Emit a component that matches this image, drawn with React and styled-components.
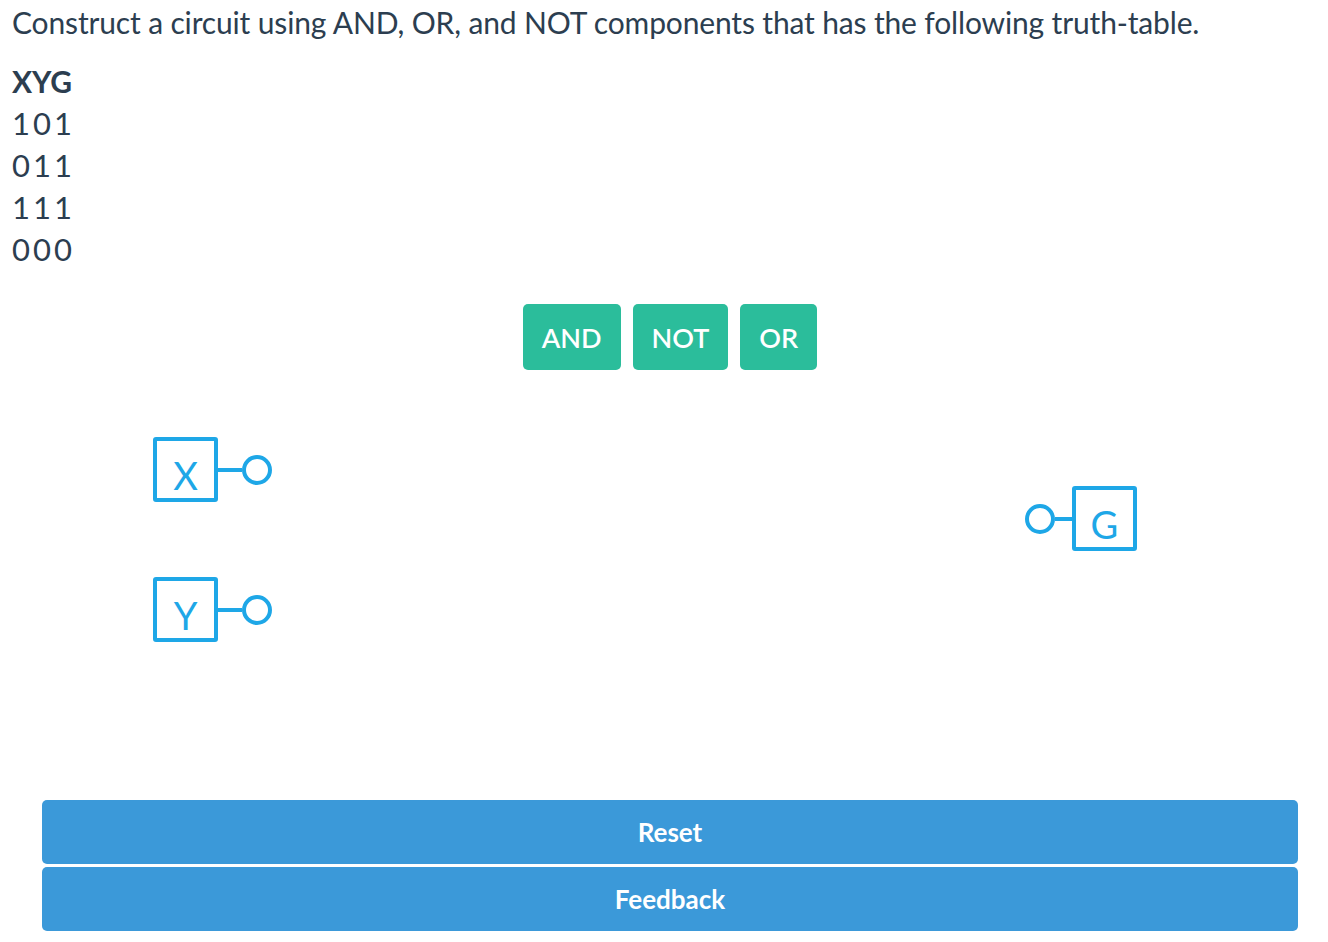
import styled, { createGlobalStyle } from 'styled-components';

const GlobalStyle = createGlobalStyle`
  body {
    margin: 0;
    background: #fff;
    font-family: 'Lato', 'Liberation Sans', sans-serif;
    color: #2c3e50;
  }
`

const rows = ['101', '011', '111', '000'];

const Node = ({ label, reverse, wire, left, top }) => (
  <NodeWrap reverse={reverse} style={{ left, top }}>
    <Box>{label}</Box>
    <Wire length={wire} />
    <Port />
  </NodeWrap>
)

const App = () => {
  return (
    <Page>
      <GlobalStyle />
      <Question>
        Construct a circuit using AND, OR, and NOT components that has the following truth-table.
      </Question>
      <Table>
        <Head>XYG</Head>
        {rows.map((r) => (
          <Row key={r}>{r}</Row>
        ))}
      </Table>

      <Toolbar>
        <Gate>AND</Gate>
        <Gate>NOT</Gate>
        <Gate>OR</Gate>
      </Toolbar>

      <Canvas>
        <Node label="X" wire={24} left={153} top={67} />
        <Node label="Y" wire={24} left={153} top={207} />
        <Node label="G" wire={17} left={1025} top={116} reverse />
      </Canvas>

      <Actions>
        <Action>Reset</Action>
        <Action>Feedback</Action>
      </Actions>
    </Page>
  )
}

const Page = styled.div`
  width: 1328px;
  height: 942px;
  padding-top: 4px;
  box-sizing: border-box;
  overflow: hidden;
`

const Question = styled.div`
  padding: 0 0 0 12px;
  font-size: 30px;
  line-height: 36px;
  letter-spacing: -0.15px;
`

const Table = styled.div`
  padding: 20px 0 0 12px;
  display: flex;
  flex-direction: column;
`

const Head = styled.div`
  font-weight: bold;
  font-size: 30px;
  line-height: 42px;
`

const Row = styled.div`
  font-size: 31px;
  line-height: 42px;
  letter-spacing: 3px;
`

const Toolbar = styled.div`
  display: flex;
  justify-content: center;
  gap: 12px;
  margin-top: 34px;
  padding: 0 30px 0 42px;
`

const Gate = styled.button`
  height: 66px;
  padding: 0 19px;
  border: none;
  border-radius: 5px;
  background: #2bbd9b;
  color: #fff;
  font-family: 'Lato', sans-serif;
  font-size: 27px;
  font-weight: 600;
`

const Canvas = styled.div`
  position: relative;
  height: 430px;
`

const NodeWrap = styled.div`
  position: absolute;
  display: flex;
  flex-direction: ${(p) => (p.reverse ? 'row-reverse' : 'row')};
  align-items: center;
`

const Box = styled.div`
  width: 65px;
  height: 65px;
  box-sizing: border-box;
  border: 4px solid #1ea7e7;
  border-radius: 3px;
  display: flex;
  align-items: center;
  justify-content: center;
  padding-top: 10px;
  color: #1ea7e7;
  font-size: 38px;
`

const Wire = styled.div`
  width: ${(p) => p.length}px;
  height: 4px;
  background: #1ea7e7;
`

const Port = styled.div`
  width: 30px;
  height: 30px;
  box-sizing: border-box;
  border: 4px solid #1ea7e7;
  border-radius: 50%;
`

const Actions = styled.div`
  display: flex;
  flex-direction: column;
  gap: 3px;
  padding: 0 30px 0 42px;
`

const Action = styled.button`
  height: 64px;
  border: none;
  border-radius: 5px;
  background: #3b99d9;
  color: #fff;
  font-family: 'Lato', sans-serif;
  font-size: 26px;
  font-weight: bold;
`

export default App
